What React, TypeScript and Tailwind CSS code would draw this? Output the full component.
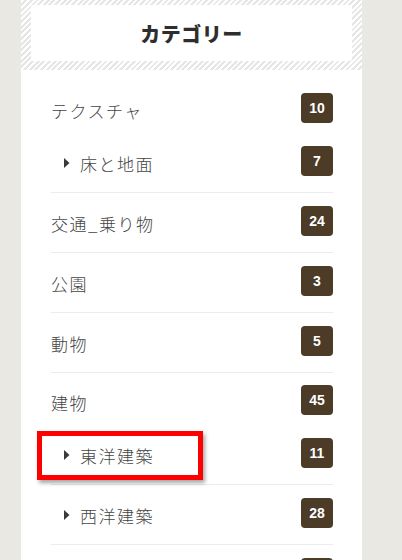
import React from "react";

type Row = {
  label: string;
  count: number;
  child?: boolean;
  pt: string;
  border: boolean;
  highlight?: boolean;
};

const rows: Row[] = [
  { label: "テクスチャ", count: 10, pt: "pt-[23px]", border: false },
  { label: "床と地面", count: 7, child: true, pt: "pt-[23px]", border: true },
  { label: "交通_乗り物", count: 24, pt: "pt-[13px]", border: true },
  { label: "公園", count: 3, pt: "pt-[13px]", border: true },
  { label: "動物", count: 5, pt: "pt-[13px]", border: true },
  { label: "建物", count: 45, pt: "pt-[12px]", border: false },
  { label: "東洋建築", count: 11, child: true, pt: "pt-[23px]", border: true, highlight: true },
  { label: "西洋建築", count: 28, child: true, pt: "pt-[13px]", border: true },
  { label: "", count: 0, child: true, pt: "pt-[13px]", border: true },
];

export default function App() {
  return (
    <div
      className="w-[402px] h-[560px] overflow-hidden bg-[#e9e8e2] pl-[21px]"
      style={{ fontFamily: '"Noto Sans CJK JP", "Noto Sans", sans-serif' }}
    >
      <div className="w-[341px] h-[560px] bg-white">
        <div className="bg-[repeating-linear-gradient(-45deg,#ffffff_0_2px,#e6e6e6_2px_4px)] pt-[5px] pb-[9px] px-[10px]">
          <div className="h-[56px] bg-white rounded-[2px] flex items-center justify-center">
            <span className="text-[20px] font-black text-[#2e2e2e] leading-none tracking-[0.5px] pt-[2px]">
              カテゴリー
            </span>
          </div>
        </div>
        <div className="pl-[30px] pr-[29px]">
          {rows.map((r, i) => (
            <div
              key={i}
              className={`relative ${r.pt} ${r.border ? "pb-[16px] border-b border-[#ececec]" : ""}`}
            >
              <div className="flex items-center justify-between h-[30px]">
                {r.child ? (
                  <div className="flex items-center pl-[13px] pt-[4px]">
                    {r.label && (
                      <>
                        <svg width="6" height="10" viewBox="0 0 6 10" className="mr-[10px]">
                          <path d="M0 0 L5.5 5 L0 10 Z" fill="#3a3a3a" />
                        </svg>
                        <span className="text-[17px] font-light text-[#444] tracking-[1.5px] leading-none">
                          {r.label}
                        </span>
                      </>
                    )}
                  </div>
                ) : (
                  <span className="text-[17px] font-light text-[#444] tracking-[1.5px] leading-none pt-[4px]">
                    {r.label}
                  </span>
                )}
                <div className="w-[32px] h-[30px] rounded-[4px] bg-[#4b3b27] flex items-center justify-center">
                  {r.count > 0 && (
                    <span
                      className="text-white text-[14px] font-bold leading-none pb-[1px]"
                      style={{ fontFamily: '"Liberation Sans", Arial, sans-serif' }}
                    >
                      {r.count}
                    </span>
                  )}
                </div>
              </div>
              {r.highlight && (
                <div className="absolute left-[-14px] top-[16px] w-[166px] h-[49px] border-[5px] border-[#ff0000] shadow-[2px_3px_4px_rgba(0,0,0,0.35)]" />
              )}
            </div>
          ))}
        </div>
      </div>
    </div>
  );
}
